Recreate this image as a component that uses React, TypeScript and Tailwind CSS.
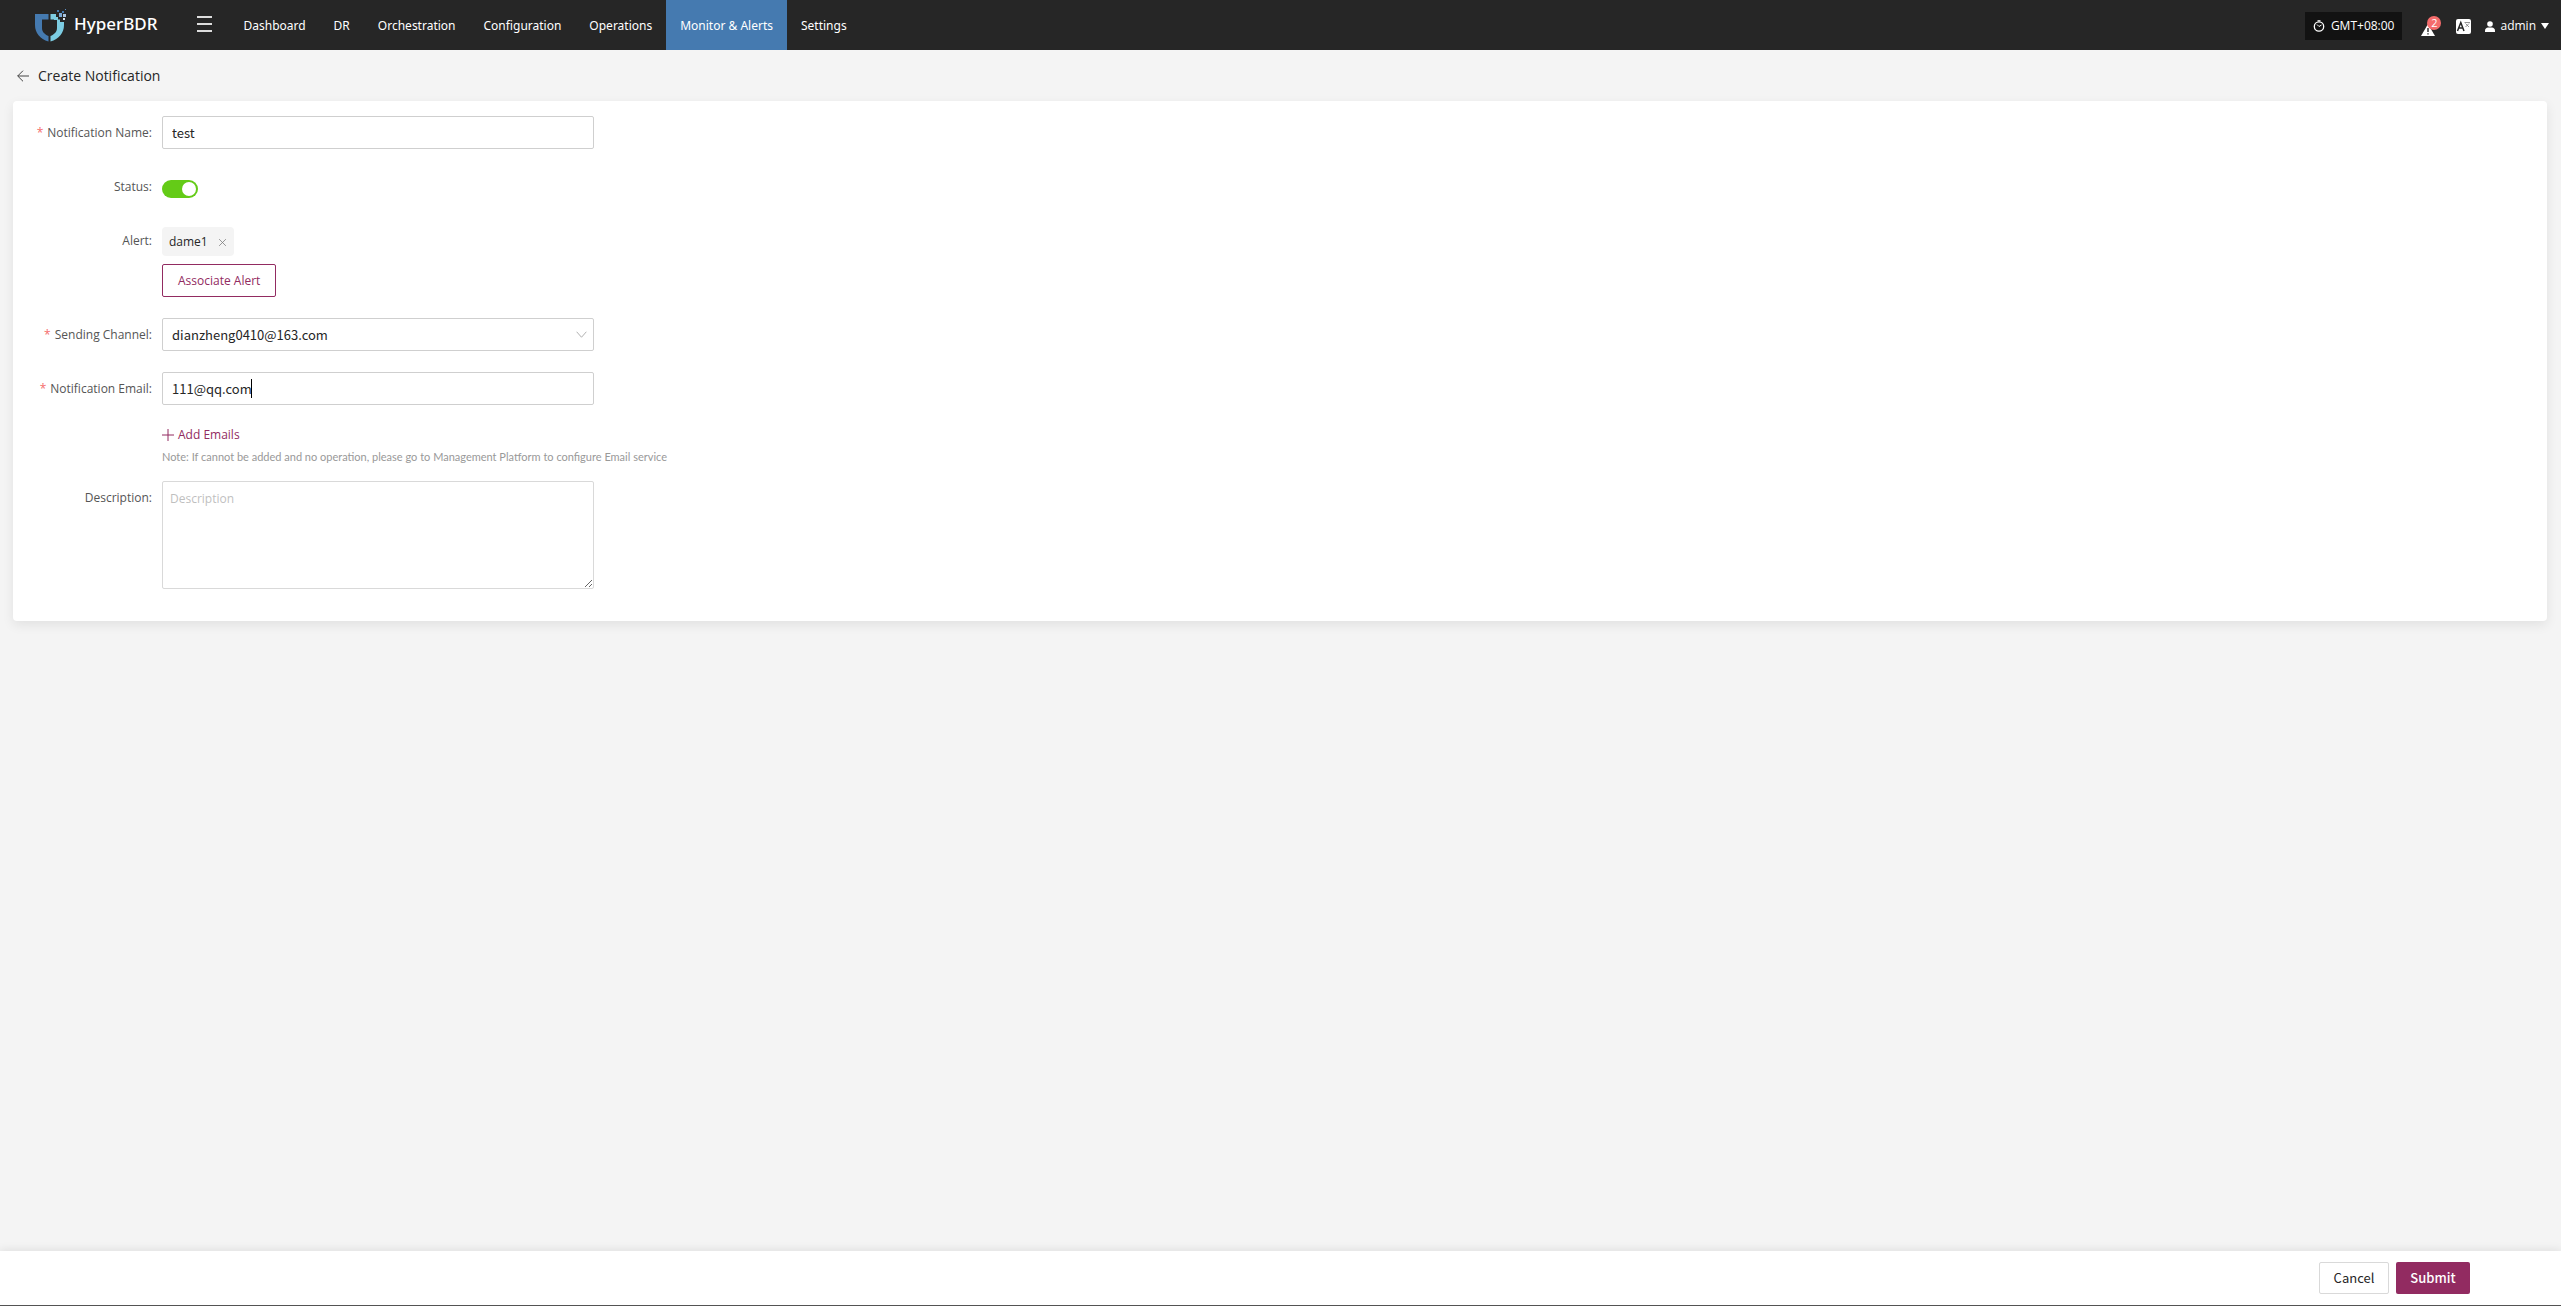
import { useState, type ReactNode } from 'react';

const navItems = [
  'Dashboard',
  'DR',
  'Orchestration',
  'Configuration',
  'Operations',
  'Monitor & Alerts',
  'Settings',
];

function Logo() {
  return (
    <svg width="34" height="34" viewBox="0 0 34 34" aria-hidden="true">
      <path d="M1 6H14.500V11.500H8V20C8 24 11 26.500 14.500 28V33.500C6 31 1 25 1 17Z" fill="#457ab0" />
      <path d="M16.500 6H20V11.500H26V14H30V17C30 25 25 31 16.500 33.500V28C20 26.500 23 24 23 20V11.500H16.500Z" fill="#7ccce2" />
      <path d="M20 6H22V9H24V12H20Z" fill="#7ccce2" />
      <rect x="23" y="2" width="2" height="2" fill="#457ab0" />
      <rect x="31" y="1" width="1" height="1" fill="#5f8fc2" />
      <rect x="28" y="3" width="2" height="2" fill="#457ab0" />
      <rect x="25" y="5" width="3" height="4" fill="#7aa9d6" />
      <rect x="29" y="6" width="3" height="3" fill="#a9c3de" />
      <rect x="29" y="10" width="2" height="2" fill="#dbe4ee" />
    </svg>
  );
}

function ClockIcon() {
  return (
    <svg width="12" height="12" viewBox="0 0 12 12" fill="none" stroke="#fff" aria-hidden="true">
      <circle cx="6" cy="6.500" r="4.700" strokeWidth="1.300" />
      <path d="M4 4.500L6 6.500L8.500 5" strokeWidth="1" />
      <path d="M4.500 0.800H7.500" strokeWidth="1.200" />
    </svg>
  );
}

// Thin stroke icons: back arrow, chevron, plus and close
function LineIcon({ d, size, className }: { d: string; size: number; className?: string }) {
  return (
    <svg
      width={size}
      height={size}
      viewBox="0 0 12 12"
      fill="none"
      stroke="currentColor"
      className={className}
      aria-hidden="true"
    >
      <path d={d} />
    </svg>
  );
}

function Header() {
  return (
    <header className="flex h-[50px] items-center bg-[#262626] font-['Noto_Sans',sans-serif] text-white">
      <a href="#home" className="flex items-center gap-1.5 pl-[34px]">
        <Logo />
        <span className="pb-0.5 text-[17px] leading-6 font-medium">HyperBDR</span>
      </a>
      <button type="button" aria-label="Toggle menu" className="ml-10 flex w-[15px] flex-col gap-[5px] pb-0.5">
        <span className="h-0.5 w-full bg-[#ddd]" />
        <span className="h-0.5 w-full bg-[#ddd]" />
        <span className="h-0.5 w-full bg-[#ddd]" />
      </button>
      <nav className="ml-[17px] flex h-full text-xs">
        {navItems.map((item) => (
          <a
            key={item}
            href="#nav"
            className={`flex h-full items-center px-3.5 pt-px ${item === 'Monitor & Alerts' ? 'bg-[#457ab0]' : ''}`}
          >
            {item}
          </a>
        ))}
      </nav>

      <div className="ml-auto flex items-center pt-0.5 pr-3 font-['Open_Sans',sans-serif] text-xs">
        <button type="button" className="flex h-7 items-center gap-1.5 bg-[#121212] px-2">
          <ClockIcon />
          GMT+08:00
        </button>
        <button type="button" aria-label="Alerts" className="relative ml-[19px] h-5 w-5">
          <svg width="14" height="12" viewBox="0 0 14 12" className="mt-2" aria-hidden="true">
            <path d="M7 0L14 12H0Z" fill="#fff" />
            <path d="M7 4V8M7 9.300V10.600" stroke="#262626" strokeWidth="1.400" />
          </svg>
          <span className="absolute top-0 left-1.5 h-3.5 w-3.5 rounded-full bg-[#f56c6c] text-center text-[11px] leading-[14px]">
            2
          </span>
        </button>
        <button type="button" aria-label="Language" className="ml-[15px]">
          <svg width="15" height="15" viewBox="0 0 15 15" fill="none" aria-hidden="true">
            <rect width="15" height="15" rx="2" fill="#fff" />
            <path d="M1.500 12L4.800 3.500L8 12M2.800 9H6.900" stroke="#262626" strokeWidth="1.500" />
            <path d="M8.500 3.500H14M9.500 4.500L13 8M13 4.500L9.500 8" stroke="#666" strokeWidth="0.700" />
          </svg>
        </button>
        <button type="button" className="ml-3.5 flex items-center gap-[5px]">
          <svg width="10" height="11" viewBox="0 0 10 11" fill="#fff" aria-hidden="true">
            <circle cx="5" cy="3" r="2.800" />
            <path d="M0 11V9.500C0 7.500 1.500 6.700 3 6.400H7C8.500 6.700 10 7.500 10 9.500V11Z" />
          </svg>
          admin
          <svg width="8" height="6" viewBox="0 0 8 6" fill="#fff" aria-hidden="true">
            <path d="M0 0H8L4 6Z" />
          </svg>
        </button>
      </div>
    </header>
  );
}

interface FieldProps {
  label: string;
  htmlFor: string;
  required?: boolean;
  children: ReactNode;
}

function Field({ label, htmlFor, required, children }: FieldProps) {
  return (
    <div className="flex">
      <label htmlFor={htmlFor} className="h-[33px] w-[149px] shrink-0 pr-2.5 text-right text-xs leading-[34px] text-[#555]">
        {required && <span className="mr-1 text-[#f56c6c]">*</span>}
        {label}:
      </label>
      <div className="min-w-0 flex-1">{children}</div>
    </div>
  );
}

const inputClass =
  "block h-[33px] w-[432px] max-w-full rounded-xs border border-[#cfcfcf] bg-white px-[9px] font-['Noto_Sans_CJK_SC',sans-serif] text-[13px] text-[#262626] outline-none";

export default function App() {
  const [name, setName] = useState('test');
  const [email, setEmail] = useState('111@qq.com');
  const [enabled, setEnabled] = useState(true);

  return (
    <div className="flex min-h-screen flex-col border-b border-[#555] bg-[#f4f4f4] font-['Open_Sans',sans-serif] text-[#262626]">
      <Header />

      <main className="flex-1 pr-3.5 pl-[13px]">
        <div className="flex h-[51px] items-center gap-[9px] pl-1">
          <button type="button" aria-label="Back">
            <LineIcon d="M12 6H0.700M6 0.700L0.700 6L6 11.300" size={12} className="text-[#444]" />
          </button>
          <h1 className="text-sm">Create Notification</h1>
        </div>

        <form
          id="notification-form"
          className="flex flex-col gap-[21px] rounded-sm bg-white pt-[15px] pb-8 shadow-[0_4px_12px_rgba(0,0,0,0.08)]"
          onSubmit={(e) => e.preventDefault()}
        >
          <Field label="Notification Name" htmlFor="name" required>
            <input id="name" className={inputClass} value={name} onChange={(e) => setName(e.target.value)} />
          </Field>

          <Field label="Status" htmlFor="status">
            <input
              id="status"
              type="checkbox"
              role="switch"
              checked={enabled}
              onChange={(e) => setEnabled(e.target.checked)}
              className="mt-2.5 flex h-[18px] w-9 appearance-none items-center rounded-full bg-[#ccc] px-0.5 before:h-3.5 before:w-3.5 before:rounded-full before:bg-white checked:justify-end checked:bg-[#64cb17]"
            />
          </Field>

          <Field label="Alert" htmlFor="alert">
            <div className="flex flex-col items-start gap-2 pt-[3px]">
              <span className="flex h-[29px] items-center gap-2.5 rounded-sm bg-[#f4f4f4] px-[7px] text-xs">
                dame1
                <button type="button" aria-label="Remove dame1">
                  <LineIcon d="M1.500 1.500L10.500 10.500M10.500 1.500L1.500 10.500" size={9} className="mt-0.5 text-[#777]" />
                </button>
              </span>
              <button
                id="alert"
                type="button"
                className="h-[33px] rounded-xs border border-[#922b61] bg-white px-[15px] pt-px text-xs text-[#922b61]"
              >
                Associate Alert
              </button>
            </div>
          </Field>

          <Field label="Sending Channel" htmlFor="channel" required>
            <div className="relative w-[432px] max-w-full">
              <select id="channel" className={`${inputClass} appearance-none`}>
                <option>dianzheng0410@163.com</option>
              </select>
              <LineIcon
                d="M0.700 3L6 9L11.300 3"
                size={11}
                className="pointer-events-none absolute top-[11px] right-[7px] text-[#aaa]"
              />
            </div>
          </Field>

          <Field label="Notification Email" htmlFor="email" required>
            <div className="relative">
              <input id="email" className={inputClass} value={email} onChange={(e) => setEmail(e.target.value)} />
              {/* Text cursor */}
              <span className="absolute top-[7px] left-[89px] h-[19px] w-px bg-black" />
            </div>
            <button type="button" className="mt-[21px] flex items-center gap-1 text-xs leading-[18px] text-[#922b61]">
              <LineIcon d="M6 0V12M0 6H12" size={12} />
              Add Emails
            </button>
            <p className="-mb-1.5 pt-1 font-[Lato,sans-serif] text-[11px] leading-[18px] text-[#999]">
              Note: If cannot be added and no operation, please go to Management Platform to configure Email service
            </p>
          </Field>

          <Field label="Description" htmlFor="description">
            <textarea
              id="description"
              placeholder="Description"
              className="block h-[108px] w-[432px] max-w-full resize-y rounded-xs border border-[#d9d9d9] px-[7px] py-2 text-xs leading-[18px] outline-none placeholder:text-[#bfbfbf]"
            />
          </Field>
        </form>
      </main>

      {/* Action bar */}
      <footer className="flex justify-end gap-[7px] bg-white py-[11px] pr-[91px] shadow-[0_-2px_8px_rgba(0,0,0,0.08)]">
        <button
          type="button"
          className="h-8 w-[70px] rounded-xs border border-[#d9d9d9] bg-white font-['Noto_Sans_CJK_SC',sans-serif] text-[13px]"
        >
          Cancel
        </button>
        <button
          type="submit"
          form="notification-form"
          className="h-8 w-[74px] rounded-xs bg-[#922b61] font-['Noto_Sans_CJK_SC',sans-serif] text-[13px] font-medium text-white"
        >
          Submit
        </button>
      </footer>
    </div>
  );
}
